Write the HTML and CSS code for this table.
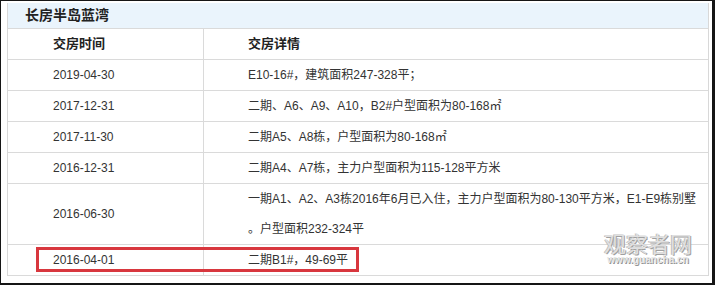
FILE: index.html
```html
<!DOCTYPE html>
<html lang="zh-CN">
<head>
<meta charset="utf-8">
<title>长房半岛蓝湾</title>
<link rel="stylesheet" href="styles.css">
</head>
<body>
<div class="frame">
  <div class="panel">
    <div class="title">长房半岛蓝湾</div>
    <table class="grid">
      <thead>
        <tr><th class="c1">交房时间</th><th class="c2">交房详情</th></tr>
      </thead>
      <tbody>
        <tr><td class="c1">2019-04-30</td><td class="c2">E10-16#，建筑面积247-328平；</td></tr>
        <tr><td class="c1">2017-12-31</td><td class="c2">二期、A6、A9、A10，B2#户型面积为80-168㎡</td></tr>
        <tr><td class="c1">2017-11-30</td><td class="c2">二期A5、A8栋，户型面积为80-168㎡</td></tr>
        <tr><td class="c1">2016-12-31</td><td class="c2">二期A4、A7栋，主力户型面积为115-128平方米</td></tr>
        <tr class="tall"><td class="c1">2016-06-30</td><td class="c2">一期A1、A2、A3栋2016年6月已入住，主力户型面积为80-130平方米，E1-E9栋别墅<br>。户型面积232-324平</td></tr>
        <tr><td class="c1">2016-04-01</td><td class="c2">二期B1#，49-69平</td></tr>
      </tbody>
    </table>
  </div>
  <div class="highlight"></div>
  <div class="watermark">
    <div class="wm-cn">观察者网</div>
    <div class="wm-en">www.guancha.cn</div>
  </div>
</div>
</body>
</html>
```

FILE: styles.css
```css
html, body {
  margin: 0;
  padding: 0;
  background: #ffffff;
}
body {
  font-family: "Liberation Sans", "Noto Sans CJK SC", sans-serif;
  color: #333333;
}
.frame {
  position: relative;
  width: 715px;
  height: 285px;
  box-sizing: border-box;
  border-style: solid;
  border-color: #151515;
  border-width: 1px 3px 2px 1px;
  padding: 2px 3px 0 6px;
  background: #ffffff;
  overflow: hidden;
}
.panel {
  width: 702px;
  box-sizing: border-box;
  border-left: 1px solid #d8d8d8;
  border-right: 1px solid #d8d8d8;
}
.title {
  height: 25px;
  line-height: 25px;
  background: #eaf4fc;
  padding-left: 17px;
  font-size: 14px;
  font-weight: bold;
  color: #222222;
}
.grid {
  width: 100%;
  border-collapse: collapse;
  font-size: 12px;
}
.grid th, .grid td {
  border-top: 1px solid #dadada;
  border-bottom: 1px solid #dadada;
  height: 30px;
  line-height: 30px;
  padding: 0 0 0 45px;
  text-align: left;
  vertical-align: middle;
  white-space: nowrap;
  color: #333333;
}
.grid th {
  font-size: 13px;
  font-weight: bold;
  color: #222222;
}
.grid .c1 {
  width: 150px;
  border-right: 1px solid #dadada;
}
.grid .c2 {
  padding-left: 44px;
}
.grid tr.tall td {
  line-height: 30px;
  height: 60px;
}
.highlight {
  position: absolute;
  left: 35px;
  top: 246px;
  width: 323px;
  height: 25px;
  box-sizing: border-box;
  border: 3px solid #d8373e;
}
.watermark {
  position: absolute;
  left: 601px;
  top: 229px;
  width: 92px;
  text-align: center;
}
.wm-cn {
  font-family: "Noto Sans CJK SC", sans-serif;
  font-size: 22px;
  line-height: 24px;
  color: #e0e0e0;
  text-shadow: 1px 1px 0 #a0a0a0, -1px 0 0 #bcbcbc;
}
.wm-en {
  font-family: "Liberation Sans", sans-serif;
  font-size: 10px;
  font-weight: bold;
  line-height: 11px;
  color: #e6e6e6;
  text-shadow: 1px 1px 0 #959595;
}
```
